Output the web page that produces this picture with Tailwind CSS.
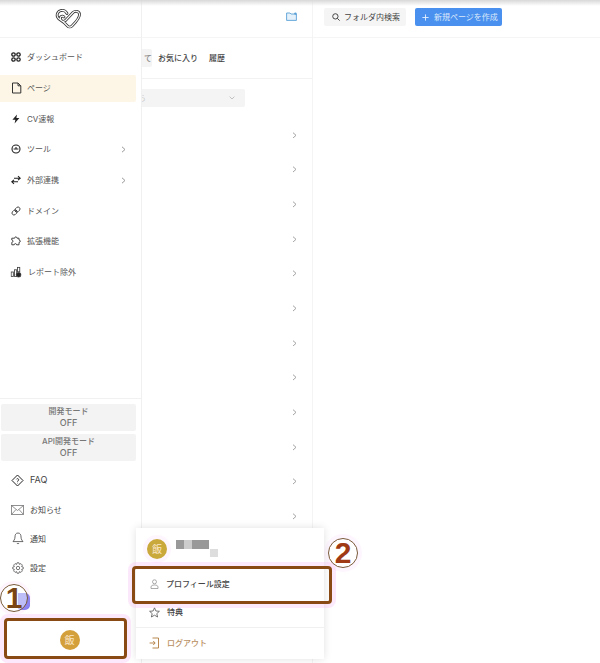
<!DOCTYPE html>
<html lang="ja">
<head>
<meta charset="utf-8">
<script src="https://cdn.jsdelivr.net/npm/@tailwindcss/browser@4"></script>
</head>
<body class="bg-white">
<div class="relative w-[600px] h-[663px] overflow-hidden bg-white font-['Inter','Noto_Sans_CJK_JP',sans-serif] text-[#333]">

  <div class="flex h-full">
    <aside class="w-[142px] shrink-0 h-full border-r border-[#f0f0f0] flex flex-col">
      <div class="h-[38px] shrink-0 border-b border-[#f3f3f3] flex items-center justify-center pb-[1px] pr-[5px]">
        <svg class="w-[27px] h-[21px]" viewBox="0 0 27 21" fill="none" stroke-linecap="round" stroke-linejoin="round">
          <path d="M9 9 C7 7 4 9 6 12 C7 13.5 9 13.5 10.5 12.5 L18 4.5 C20 2.5 24 3 24.5 6 C25 9 20 15 17 18 C15.5 19.5 13.5 19 12.5 18 L9 14.5 L3.5 10.5 C1 8 2 3.5 6 2.5 C9 2 11 3.5 12 5.5" stroke="#333" stroke-width="2.8"/>
          <path d="M9 9 C7 7 4 9 6 12 C7 13.5 9 13.5 10.5 12.5 L18 4.5 C20 2.5 24 3 24.5 6 C25 9 20 15 17 18 C15.5 19.5 13.5 19 12.5 18 L9 14.5 L3.5 10.5 C1 8 2 3.5 6 2.5 C9 2 11 3.5 12 5.5" stroke="#fff" stroke-width="1.1"/>
        </svg>
      </div>

      <nav class="pt-[4px] flex-1 text-[8px] text-[#555]">
        <a class="h-[30.7px] pl-[11px] flex items-center gap-[6px]">
          <svg class="w-[10px] h-[10px]" viewBox="0 0 10 10" fill="none" stroke="#222" stroke-width="1.3"><circle cx="2.5" cy="2.5" r="1.7"/><circle cx="7.5" cy="2.5" r="1.7"/><circle cx="2.5" cy="7.5" r="1.7"/><circle cx="7.5" cy="7.5" r="1.7"/></svg>
          <span>ダッシュボード</span>
        </a>
        <a class="h-[27px] my-[1.85px] w-[136px] pl-[11px] flex items-center gap-[5.5px] bg-[#fdf6e6] rounded-r-[2px]">
          <svg class="w-[11px] h-[12px] -ml-[0.5px]" viewBox="0 0 11 12" fill="none" stroke="#333" stroke-width="1" stroke-linejoin="round"><path d="M1.5 1 H7 L9.8 3.8 V11 H1.5 Z"/><path d="M7 1 V3.8 H9.8"/></svg>
          <span>ページ</span>
        </a>
        <a class="h-[30.7px] pl-[11px] flex items-center gap-[6px]">
          <svg class="w-[10px] h-[10px]" viewBox="0 0 10 10" fill="#222"><path d="M6 0.4 L1.4 5.8 H4.4 L3.6 9.6 L8.4 4 H5.4 Z"/></svg>
          <span>CV速報</span>
        </a>
        <a class="h-[30.7px] pl-[11px] pr-[15px] flex items-center gap-[6px]">
          <svg class="w-[10px] h-[10px]" viewBox="0 0 10 10" fill="none" stroke="#222" stroke-width="1.1"><circle cx="5" cy="5" r="4"/><path d="M2.6 5 H7.4 M5 3 V5"/></svg>
          <span class="flex-1">ツール</span>
          <svg class="w-[5px] h-[7px]" viewBox="0 0 5 7" fill="none" stroke="#999" stroke-width="1"><path d="M1 0.8 L4 3.5 L1 6.2"/></svg>
        </a>
        <a class="h-[30.7px] pl-[11px] pr-[15px] flex items-center gap-[6px]">
          <svg class="w-[10px] h-[10px]" viewBox="0 0 10 10" fill="none" stroke="#222" stroke-width="1.1"><path d="M3 3.2 H9 M7 1.2 L9.2 3.2 L7 5.2" /><path d="M7 6.8 H1 M3 4.8 L0.8 6.8 L3 8.8"/></svg>
          <span class="flex-1">外部連携</span>
          <svg class="w-[5px] h-[7px]" viewBox="0 0 5 7" fill="none" stroke="#999" stroke-width="1"><path d="M1 0.8 L4 3.5 L1 6.2"/></svg>
        </a>
        <a class="h-[30.7px] pl-[11px] flex items-center gap-[6px]">
          <svg class="w-[10px] h-[10px]" viewBox="0 0 10 10" fill="none" stroke="#333" stroke-width="0.9"><path d="M4 6 L6 4"/><path d="M4.4 2.8 L5.8 1.4 A2 2 0 0 1 8.6 4.2 L7.2 5.6 A2 2 0 0 1 4.4 2.8 Z"/><path d="M2.8 4.4 L1.4 5.8 A2 2 0 0 0 4.2 8.6 L5.6 7.2 A2 2 0 0 0 2.8 4.4 Z"/></svg>
          <span>ドメイン</span>
        </a>
        <a class="h-[30.7px] pl-[11px] flex items-center gap-[6px]">
          <svg class="w-[10px] h-[10px]" viewBox="0 0 10 10" fill="none" stroke="#333" stroke-width="0.9" stroke-linejoin="round"><path d="M3.6 2.2 C3.6 0.4 6 0.4 6 2.2 H8 V4 C9.8 4 9.8 6.4 8 6.4 V8.8 H5.6 C5.6 7.2 3.2 7.2 3.2 8.8 H0.8 V6.4 C2.4 6.4 2.4 4 0.8 4 V2.2 Z"/></svg>
          <span>拡張機能</span>
        </a>
        <a class="h-[30.7px] pl-[11px] flex items-center gap-[7px]">
          <svg class="w-[10px] h-[10px] scale-110" viewBox="0 0 10 10" fill="none" stroke="#444" stroke-width="0.8"><rect x="0.6" y="5" width="2" height="4"/><rect x="3.6" y="3" width="2" height="6"/><rect x="6.4" y="0.8" width="2" height="4"/><circle cx="7.4" cy="7.6" r="2.2" fill="#222"/></svg>
          <span>レポート除外</span>
        </a>
      </nav>

      <div class="border-t border-[#f1f1f1] pt-[5px] pl-[1px] pr-[5px] flex flex-col gap-[3px] text-[8px] leading-[11px] text-[#777] font-medium text-center">
        <button class="h-[27px] bg-[#f3f3f3] rounded-[2px] block">開発モード<br><span class="text-[9px]">OFF</span></button>
        <button class="h-[27px] bg-[#f3f3f3] rounded-[2px] block">API開発モード<br><span class="text-[9px]">OFF</span></button>
      </div>

      <div class="pt-[4px] text-[8px] text-[#444]">
        <a class="h-[29.4px] pl-[11px] flex items-center gap-[6px]">
          <svg class="w-[13px] h-[13px]" viewBox="0 0 13 13" fill="none" stroke="#222" stroke-width="1"><path d="M6.5 1 L12 6.5 L6.5 12 L1 6.5 Z"/><path d="M5.4 5.4 A1.2 1.2 0 1 1 6.5 7 V7.6 M6.5 8.8 V9.4" stroke-width="0.8"/></svg>
          <span class="text-[9px]">FAQ</span>
        </a>
        <a class="h-[29.4px] pl-[11px] flex items-center gap-[6px]">
          <svg class="w-[13px] h-[10px]" viewBox="0 0 13 10" fill="none" stroke="#777" stroke-width="0.8"><rect x="0.5" y="0.5" width="12" height="9"/><path d="M0.5 0.5 L6.5 5.5 L12.5 0.5 M0.5 9.5 L5 4.5 M12.5 9.5 L8 4.5"/></svg>
          <span>お知らせ</span>
        </a>
        <a class="h-[29.4px] pl-[12px] flex items-center gap-[6px]">
          <svg class="w-[12px] h-[13px]" viewBox="0 0 12 13" fill="none" stroke="#444" stroke-width="0.8" stroke-linejoin="round"><path d="M6 1 C3.6 1 3 3 3 5 C3 7.6 1.4 9 1 9.6 H11 C10.6 9 9 7.6 9 5 C9 3 8.4 1 6 1 Z"/><path d="M4.8 11 A1.4 1.4 0 0 0 7.2 11"/></svg>
          <span>通知</span>
        </a>
        <a class="h-[29.4px] pl-[12px] flex items-center gap-[6px]">
          <svg class="w-[12px] h-[12px]" viewBox="0 0 12 12" fill="none" stroke="#555" stroke-width="0.8" stroke-linejoin="round"><path d="M5 0.8 H7 L7.4 2.4 L8.9 1.6 L10.4 3.1 L9.6 4.6 L11.2 5 V7 L9.6 7.4 L10.4 8.9 L8.9 10.4 L7.4 9.6 L7 11.2 H5 L4.6 9.6 L3.1 10.4 L1.6 8.9 L2.4 7.4 L0.8 7 V5 L2.4 4.6 L1.6 3.1 L3.1 1.6 L4.6 2.4 Z"/><circle cx="6" cy="6" r="1.7"/></svg>
          <span>設定</span>
        </a>
      </div>

      <div class="flex-none h-[80px] flex items-end justify-center pb-[13px] pr-[2px]">
        <span class="w-[20px] h-[20px] rounded-full bg-[#d4a03c] text-[#fbe6c8] text-[10px] flex items-center justify-center">飯</span>
      </div>
    </aside>

    <section class="w-[171px] shrink-0 h-full border-r border-[#f4f4f4] flex flex-col">
      <div class="h-[38px] shrink-0 border-b border-[#f5f5f5] flex items-center justify-end pr-[15px] pb-[4px]">
        <svg class="w-[11px] h-[9px]" viewBox="0 0 11 9" fill="#e4f0fa" stroke="#5aa0d6" stroke-width="0.9"><path d="M0.6 1 H4 L5 2 H10.4 V8.4 H0.6 Z"/><circle cx="9.4" cy="1.6" r="1.2" fill="#5aa0d6" stroke="none"/></svg>
      </div>
      <div class="h-[41px] shrink-0 border-b border-[#f2f2f2] flex items-center text-[8px] font-medium text-[#444] pb-[1px]">
        <span class="w-[10px] h-[18px] bg-[#f4f4f4] text-[#888] flex items-center justify-end overflow-hidden rounded-r-[2px]">て</span>
        <span class="ml-[6px]">お気に入り</span>
        <span class="ml-[11px]">履歴</span>
      </div>
      <div class="pt-[10px]">
        <div class="w-[103px] h-[18px] bg-[#f4f4f4] rounded-r-[2px] flex items-center justify-end pr-[10px] relative overflow-hidden">
          <span class="absolute -left-[4px] text-[8px] text-[#ccc]">ら</span>
          <svg class="w-[6px] h-[4px]" viewBox="0 0 6 4" fill="none" stroke="#bbb" stroke-width="0.9"><path d="M0.6 0.6 L3 3 L5.4 0.6"/></svg>
        </div>
      </div>
      <div class="pt-[10.5px] flex flex-col items-end pr-[15px]">
        <svg class="w-[5px] h-[34.7px] py-[13.85px]" viewBox="0 0 5 7" fill="none" stroke="#999" stroke-width="0.9"><path d="M1 0.8 L4 3.5 L1 6.2"/></svg>
        <svg class="w-[5px] h-[34.7px] py-[13.85px]" viewBox="0 0 5 7" fill="none" stroke="#999" stroke-width="0.9"><path d="M1 0.8 L4 3.5 L1 6.2"/></svg>
        <svg class="w-[5px] h-[34.7px] py-[13.85px]" viewBox="0 0 5 7" fill="none" stroke="#999" stroke-width="0.9"><path d="M1 0.8 L4 3.5 L1 6.2"/></svg>
        <svg class="w-[5px] h-[34.7px] py-[13.85px]" viewBox="0 0 5 7" fill="none" stroke="#999" stroke-width="0.9"><path d="M1 0.8 L4 3.5 L1 6.2"/></svg>
        <svg class="w-[5px] h-[34.7px] py-[13.85px]" viewBox="0 0 5 7" fill="none" stroke="#999" stroke-width="0.9"><path d="M1 0.8 L4 3.5 L1 6.2"/></svg>
        <svg class="w-[5px] h-[34.7px] py-[13.85px]" viewBox="0 0 5 7" fill="none" stroke="#999" stroke-width="0.9"><path d="M1 0.8 L4 3.5 L1 6.2"/></svg>
        <svg class="w-[5px] h-[34.7px] py-[13.85px]" viewBox="0 0 5 7" fill="none" stroke="#999" stroke-width="0.9"><path d="M1 0.8 L4 3.5 L1 6.2"/></svg>
        <svg class="w-[5px] h-[34.7px] py-[13.85px]" viewBox="0 0 5 7" fill="none" stroke="#999" stroke-width="0.9"><path d="M1 0.8 L4 3.5 L1 6.2"/></svg>
        <svg class="w-[5px] h-[34.7px] py-[13.85px]" viewBox="0 0 5 7" fill="none" stroke="#999" stroke-width="0.9"><path d="M1 0.8 L4 3.5 L1 6.2"/></svg>
        <svg class="w-[5px] h-[34.7px] py-[13.85px]" viewBox="0 0 5 7" fill="none" stroke="#999" stroke-width="0.9"><path d="M1 0.8 L4 3.5 L1 6.2"/></svg>
        <svg class="w-[5px] h-[34.7px] py-[13.85px]" viewBox="0 0 5 7" fill="none" stroke="#999" stroke-width="0.9"><path d="M1 0.8 L4 3.5 L1 6.2"/></svg>
        <svg class="w-[5px] h-[34.7px] py-[13.85px]" viewBox="0 0 5 7" fill="none" stroke="#999" stroke-width="0.9"><path d="M1 0.8 L4 3.5 L1 6.2"/></svg>
      </div>
    </section>

    <section class="flex-1 h-full">
      <div class="h-[38px] border-b border-[#f5f5f5] flex items-center pl-[11px] gap-[9px] pb-[3px] text-[8px]">
        <button class="h-[18px] w-[82px] bg-[#f5f5f5] rounded-[2px] flex items-center pl-[8px] gap-[4px] text-[#444] whitespace-nowrap">
          <svg class="w-[8px] h-[8px] shrink-0" viewBox="0 0 9 9" fill="none" stroke="#333" stroke-width="1"><circle cx="3.8" cy="3.8" r="3"/><path d="M6 6 L8.6 8.6"/></svg>
          <span>フォルダ内検索</span>
        </button>
        <button class="h-[18px] w-[87px] bg-[#4a90ee] rounded-[2px] flex items-center pl-[7px] gap-[5px] text-[#dbe9fb] whitespace-nowrap">
          <svg class="w-[7px] h-[7px] shrink-0" viewBox="0 0 7 7" fill="none" stroke="#e8f1fc" stroke-width="0.9"><path d="M3.5 0.4 V6.6 M0.4 3.5 H6.6"/></svg>
          <span>新規ページを作成</span>
        </button>
      </div>
    </section>
  </div>

  <div class="absolute top-0 left-0 right-0 h-[6px] bg-gradient-to-b from-[#d8d8d8] to-white/0"></div>

  <!-- User popup -->
  <div class="absolute left-[136px] top-[528px] w-[188px] h-[131px] bg-white shadow-[0_0_8px_rgba(0,0,0,0.12)] text-[8px]">
    <div class="h-[39px] flex items-center pl-[11px] gap-[9px] pt-[3px]">
      <span class="w-[20px] h-[20px] rounded-full bg-[#c9a83c] text-[#fbe6c8] text-[10px] flex items-center justify-center shadow-[0_0_0_4px_rgba(247,182,244,0.12)]">飯</span>
      <div class="w-[44px] h-[20px] flex flex-col">
        <div class="flex mt-[1px] h-[9px]"><i class="w-[8px] bg-[#999]"></i><i class="w-[8px] bg-[#ccc]"></i><i class="w-[17px] bg-[#999]"></i></div>
        <div class="ml-[34px] w-[8px] h-[8px] bg-[#ddd]"></div>
      </div>
    </div>
    <div class="h-[34px] flex items-center pl-[14px] gap-[7px] text-[#444] font-medium">
      <svg class="w-[9px] h-[10px]" viewBox="0 0 9 10" fill="none" stroke="#888" stroke-width="0.7"><circle cx="4.5" cy="2.8" r="2"/><path d="M1 9.5 V8 C1 6.6 2.4 6 4.5 6 C6.6 6 8 6.6 8 8 V9.5 Z"/></svg>
      <span>プロフィール設定</span>
    </div>
    <div class="h-[27px] flex items-center pl-[13px] gap-[7px] text-[#444] font-medium border-b border-[#f0f0f0] pb-[4px]">
      <svg class="w-[11px] h-[11px]" viewBox="0 0 11 11" fill="none" stroke="#555" stroke-width="0.8" stroke-linejoin="round"><path d="M5.5 0.8 L6.9 4 L10.4 4.3 L7.8 6.6 L8.6 10 L5.5 8.2 L2.4 10 L3.2 6.6 L0.6 4.3 L4.1 4 Z"/></svg>
      <span>特典</span>
    </div>
    <div class="h-[31px] flex items-center pl-[13px] gap-[7px] text-[#b98f62] font-medium pb-[2px]">
      <svg class="w-[11px] h-[12px]" viewBox="0 0 11 12" fill="none" stroke="#b07a3c" stroke-width="0.9"><path d="M3.5 1 H9.5 V11 H3.5 M0.6 6 H6 M4.2 4 L6.2 6 L4.2 8"/></svg>
      <span>ログアウト</span>
    </div>
  </div>

  <!-- Annotations -->
  <div class="absolute left-[132px] top-[566px] w-[200px] h-[38px] border-[3px] border-[#8a4a14] rounded-[4px] shadow-[0_0_0_4px_rgba(247,182,244,0.3)] pointer-events-none"></div>
  <div class="absolute left-[4px] top-[618px] w-[123px] h-[41px] border-[3px] border-[#8a4a14] rounded-[4px] shadow-[0_0_0_4px_rgba(247,182,244,0.3)] pointer-events-none"></div>

  <div class="absolute left-[18px] top-[593px] w-[12px] h-[17px] bg-[#7a7af0] rounded-r-[5px] rounded-bl-[2px]"></div>
  <div class="absolute left-0 top-[584px] w-[28px] h-[28px] rounded-full border-[1.5px] border-[#7a5a3a] bg-white/50 flex items-center justify-center text-[30px] font-bold leading-none text-[#7a4514] font-['Liberation_Sans',sans-serif] shadow-[0_0_0_3px_rgba(247,182,244,0.15)]">1</div>
  <div class="absolute left-[328px] top-[538px] w-[30px] h-[30px] rounded-full border-[1.5px] border-[#7a5a3a] bg-white flex items-center justify-center text-[30px] font-bold leading-none text-[#a03a14] font-['Liberation_Sans',sans-serif] shadow-[0_0_0_4px_rgba(247,182,244,0.12)]">2</div>
</div>
</body>
</html>
